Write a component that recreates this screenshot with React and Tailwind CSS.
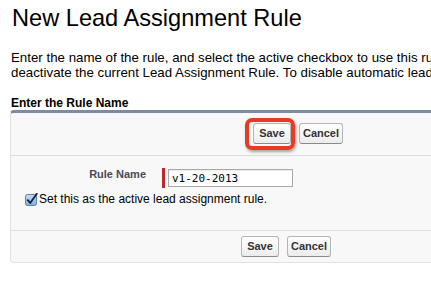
import React from 'react';

const font = { fontFamily: '"Liberation Sans", Arial, sans-serif' };

const Button = ({ label, width }) => (
  <button
    className={`h-[21px] ${width} rounded-[3px] border border-[#b5b5b5] border-b-[#8a8a8a] bg-gradient-to-b from-white to-[#ececec] text-[11px] font-bold leading-none text-[#333]`}
  >
    {label}
  </button>
);

const CheckedBox = () => (
  <svg width="13" height="13" viewBox="0 0 13 13" className="shrink-0">
    <defs>
      <linearGradient id="cb" x1="0" y1="0" x2="0" y2="1">
        <stop offset="0" stopColor="#c9def5" />
        <stop offset="1" stopColor="#7eaee4" />
      </linearGradient>
    </defs>
    <rect x="0.5" y="1.5" width="11" height="11" rx="2" fill="url(#cb)" stroke="#5b7fae" />
    <path d="M2.8 7.2 L5.2 10 L11.8 0.8" fill="none" stroke="#17233b" strokeWidth="1.9" strokeLinecap="round" strokeLinejoin="round" />
  </svg>
);

export default function App() {
  return (
    <div className="w-[431px] h-[304px] overflow-hidden bg-white text-black" style={font}>
      <div className="pl-[11px] pt-[5px]">
        <h1 className="text-[23.6px] leading-[27px] font-normal pl-px">New Lead Assignment Rule</h1>
        <p className="mt-[18px] text-[13.3px] leading-[15px] whitespace-nowrap">
          Enter the name of the rule, and select the active checkbox to use this rule for incoming leads. Saving will
          <br />
          deactivate the current Lead Assignment Rule. To disable automatic lead assignment, uncheck this box.
        </p>
        <h2 className="mt-4 text-[12px] leading-[14px] font-bold">Enter the Rule Name</h2>
      </div>

      {/* Panel */}
      <div className="ml-[10px] w-[440px] rounded-tl-[4px] rounded-bl-[4px] border border-t-[3px] border-[#e0e3e5] border-t-[#7d8ca3] bg-[#f8f8f8]">
        <div className="relative flex gap-2 pl-[242px] pt-[10px] pb-[11px]">
          <Button label="Save" width="w-[38px]" />
          <Button label="Cancel" width="w-[44px]" />
          <div className="absolute left-[234px] top-[5px] h-[32px] w-[50px] rounded-[7px] border-[4px] border-[#ec3a22] shadow-[1px_2px_3px_rgba(0,0,0,0.35)]" />
        </div>

        <div className="h-[76px] border-t border-b border-[#dcdcdc]">
          <div className="mt-[11px] flex items-start">
            <div className="w-[135px] text-right text-[11px] leading-[14px] font-bold text-[#4a4a56]">Rule Name</div>
            <div className="ml-4 mt-px h-[20px] w-[3px] bg-[#c0272d]" />
            <input
              readOnly
              value="v1-20-2013"
              className="ml-[3px] mt-[2px] h-[18px] w-[125px] border border-[#a9a9a9] bg-white px-[3px] text-[11px] text-black outline-none shadow-[inset_0_1px_1px_rgba(0,0,0,0.08)]"
              style={{ fontFamily: '"DejaVu Sans Mono", monospace' }}
            />
          </div>
          <div className="mt-[5px] ml-[14px] flex items-center gap-px">
            <CheckedBox />
            <span className="text-[12px] leading-[13px]">Set this as the active lead assignment rule.</span>
          </div>
        </div>

        <div className="flex gap-2 pl-[230px] pt-[5px] pb-[5px]">
          <Button label="Save" width="w-[38px]" />
          <Button label="Cancel" width="w-[44px]" />
        </div>
      </div>
    </div>
  );
}
